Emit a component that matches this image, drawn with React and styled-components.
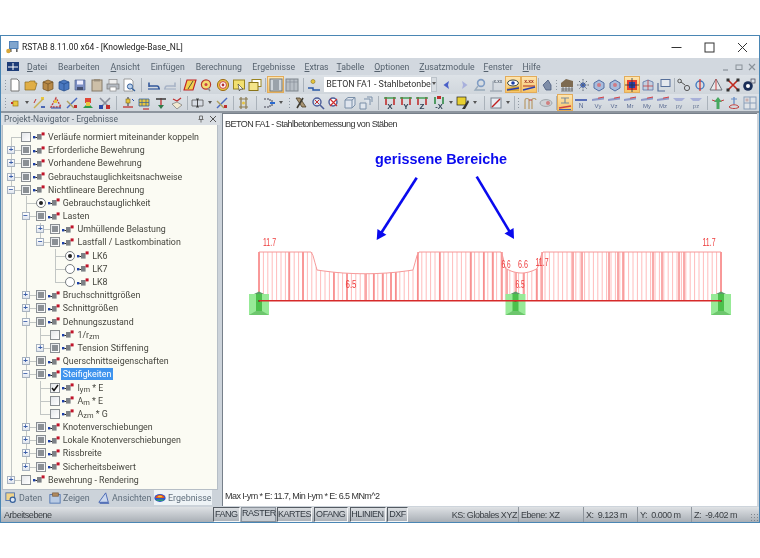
import styled, { createGlobalStyle } from "styled-components";

const Global = createGlobalStyle`
  html, body { margin: 0; padding: 0; background: #fff; }
  body { font-family: Roboto, "Noto Sans", sans-serif; }
`;

const Page = styled.div`
  width: 760px;
  height: 558px;
  padding-top: 35px;
  box-sizing: border-box;
  overflow: hidden;
  filter: blur(0.35px);
`;
const Win = styled.div`
  height: 488px;
  display: flex;
  flex-direction: column;
  border: 1px solid #4a86b4;
  border-bottom-width: 1.5px;
  box-sizing: border-box;
  background: #cdd4db;
`;
const TitleBar = styled.div`
  height: 22px;
  flex: none;
  display: flex;
  align-items: center;
  background: #fff;
  padding-left: 5px;
`;
const TitleText = styled.span`
  margin-left: 3px;
  font-size: 8.5px;
  color: #222;
  flex: 1;
`;
const WinBtn = styled.div`
  width: 33px;
  height: 22px;
  display: flex;
  align-items: center;
  justify-content: center;
`;
const MenuBar = styled.div`
  height: 17px;
  flex: none;
  display: flex;
  align-items: center;
  background: #d2d8df;
  padding-left: 6px;
`;
const MenuItem = styled.span`
  font-size: 8.7px;
  color: #56626e;
  margin-left: ${({ $ml }) => $ml}px;
  u { text-underline-offset: 1px; }
`;
const MdiBtns = styled.div`
  margin-left: auto;
  display: flex;
  gap: 5px;
  padding-right: 3px;
  align-items: center;
`;
const ToolBar = styled.div`
  height: 19px;
  flex: none;
  display: flex;
  align-items: center;
  background: linear-gradient(#dde2e7, #d0d6dc);
  padding-left: 3px;
  box-sizing: border-box;
  ${({ $last }) => $last && "border-bottom: 2px solid #8d959e;"}
`;
const Btn = styled.div`
  width: 16.3px;
  height: 17px;
  flex: none;
  display: flex;
  align-items: center;
  justify-content: center;
  box-sizing: border-box;
  ${({ $on }) => $on && "background: linear-gradient(#fde5b0, #f6c468); border: 1px solid #e3ac5a;"}
`;
const Sep = styled.div`
  width: ${({ $w }) => $w}px;
  height: 14px;
  flex: none;
  position: relative;
  &::after {
    content: "";
    position: absolute;
    left: 50%;
    top: 0;
    bottom: 0;
    width: 1px;
    background: #aab2ba;
  }
`;
const Dots = styled.div`
  width: ${({ $w }) => $w}px;
  height: 12px;
  flex: none;
  background: radial-gradient(circle, #8f98a2 0.7px, transparent 1px) center top / 3px 3px repeat-y;
`;
const Arrow = styled.div`
  width: 8px;
  flex: none;
  display: flex;
  justify-content: center;
  &::after {
    content: "";
    border: 2px solid transparent;
    border-top: 3px solid #555;
    margin-top: 2px;
  }
`;
const Combo = styled.div`
  width: 113px;
  height: 15px;
  flex: none;
  display: flex;
  margin: 0 2px;
  background: #fff;
`;
const ComboText = styled.span`
  flex: 1;
  font-size: 8.9px;
  line-height: 15px;
  color: #333;
  padding-left: 2px;
  white-space: nowrap;
`;
const ComboDrop = styled.div`
  width: 10px;
  background: #d8dde2;
  border: 1px solid #bcc3ca;
  box-sizing: border-box;
  display: flex;
  justify-content: center;
  &::after {
    content: "";
    border: 2.5px solid transparent;
    border-top: 3px solid #555;
    margin-top: 4px;
  }
`;
const Main = styled.div`
  flex: 1;
  min-height: 0;
  display: flex;
  padding-right: 1px;
`;
const Panel = styled.div`
  width: 219px;
  flex: none;
  display: flex;
  flex-direction: column;
  background: #ccd3da;
`;
const PanelHead = styled.div`
  height: 12px;
  flex: none;
  display: flex;
  align-items: center;
  justify-content: space-between;
  padding: 0 3px;
  font-size: 8.5px;
  color: #56626e;
  background: #d9dee3;
`;
const PanelTools = styled.div`
  display: flex;
  gap: 4px;
  align-items: center;
`;
const TreeBox = styled.div`
  flex: 1;
  min-height: 0;
  margin: 0 2px 0 1px;
  padding-top: 5.4px;
  background: #fbfbf3;
  border: 1px solid #b6bec6;
  border-width: 0 1px 1px 1px;
  box-sizing: border-box;
  overflow: hidden;
`;
const Row = styled.div`
  height: 13.2px;
  display: flex;
  align-items: center;
  padding-left: 1px;
`;
const Guide = styled.div`
  width: 14.7px;
  height: 100%;
  flex: none;
  position: relative;
  &::before {
    content: "";
    display: ${({ $t }) => ($t === " " ? "none" : "block")};
    position: absolute;
    left: 7px;
    width: 1px;
    background: #c2c6c4;
    top: ${({ $t }) => ($t === "r" ? "50%" : 0)};
    bottom: ${({ $t }) => ($t === "L" ? "50%" : 0)};
  }
  &::after {
    content: "";
    display: ${({ $t }) => ($t === " " || $t === "|" ? "none" : "block")};
    position: absolute;
    left: 7px;
    width: 10px;
    top: 50%;
    height: 1px;
    background: #c2c6c4;
  }
`;
const Expander = styled.div`
  position: absolute;
  left: 3px;
  top: 2.6px;
  width: 8px;
  height: 8px;
  z-index: 1;
  box-sizing: border-box;
  border: 1px solid #a7b2bf;
  background: linear-gradient(#fff, #dfe5ee);
  display: flex;
  align-items: center;
  justify-content: center;
  font: 700 8px/6px "Liberation Sans", sans-serif;
  color: #3b5ea8;
`;
const Check = styled.div`
  width: 10px;
  height: 10px;
  flex: none;
  margin-left: 2.3px;
  box-sizing: border-box;
  border: 1px solid #8a8f93;
  background: linear-gradient(135deg, #e4e7ea, #fff);
  display: flex;
  align-items: center;
  justify-content: center;
  &::after {
    content: "";
    display: ${({ $v }) => ($v === "mixed" ? "block" : "none")};
    width: 6px;
    height: 6px;
    background: #8b9095;
  }
`;
const Radio = styled.div`
  width: 10px;
  height: 10px;
  flex: none;
  margin-left: 2.3px;
  box-sizing: border-box;
  border: 1px solid #777c80;
  border-radius: 50%;
  background: #fff;
  display: flex;
  align-items: center;
  justify-content: center;
  &::after {
    content: "";
    display: ${({ $on }) => ($on ? "block" : "none")};
    width: 4px;
    height: 4px;
    border-radius: 50%;
    background: #222;
  }
`;
const Label = styled.span`
  margin-left: 1.6px;
  padding: 0 1.5px;
  font-size: 8.85px;
  line-height: 12px;
  white-space: nowrap;
  color: ${({ $sel }) => ($sel ? "#fff" : "#46463f")};
  background: ${({ $sel }) => ($sel ? "#3f94ee" : "transparent")};
  sub { font-size: 7.5px; line-height: 0; vertical-align: -1px; }
`;
const Tabs = styled.div`
  height: 15px;
  flex: none;
  display: flex;
  align-items: center;
  margin-bottom: 2px;
  padding-left: 4px;
`;
const Tab = styled.div`
  width: ${({ $w }) => $w}px;
  height: 15px;
  flex: none;
  display: flex;
  align-items: center;
  gap: 2px;
  font-size: 8.9px;
  color: #5f6e7c;
  box-sizing: border-box;
  ${({ $on }) => $on && "background: #eef3f6;"}
`;
const View = styled.div`
  flex: 1;
  min-width: 0;
  margin: 0 1px 1px 2px;
  display: flex;
  flex-direction: column;
  background: #fff;
  border-left: 1px solid #77808a;
  border-top: 1px solid #77808a;
`;
const Caption = styled.div`
  height: 20px;
  flex: none;
  display: flex;
  align-items: center;
  padding-left: 2px;
  font-family: "Liberation Sans", Arial, sans-serif;
  font-size: 9px;
  letter-spacing: -0.55px;
  color: #333;
  white-space: nowrap;
`;
const Canvas = styled.svg`
  flex: 1;
  min-height: 0;
  width: 100%;
  display: block;
`;
const Status = styled.div`
  height: 15px;
  flex: none;
  display: flex;
  align-items: stretch;
  background: linear-gradient(#dfe2e5, #a9afb6);
  font-family: "Liberation Sans", Arial, sans-serif;
  font-size: 9px;
  letter-spacing: -0.45px;
  color: #3a3f44;
  position: relative;
`;
const StatusName = styled.div`
  width: 212px;
  flex: none;
  box-sizing: border-box;
  padding-left: 3px;
  line-height: 16px;
`;
const Toggle = styled.div`
  width: ${({ $w }) => $w}px;
  flex: none;
  margin-right: 1.5px;
  box-sizing: border-box;
  border: 1px solid #f4f5f6;
  border-left-color: #555b62;
  border-top-color: #555b62;
  text-align: center;
  line-height: 13px;
  color: #333a42;
  ${({ $on }) => $on && "border-color: #8b929a; background: #c6cbd1; line-height: 11px;"}
`;
const Field = styled.div`
  width: ${({ $w }) => $w}px;
  flex: none;
  box-sizing: border-box;
  padding-left: 2px;
  line-height: 16px;
  white-space: pre;
  text-align: ${({ $right }) => ($right ? "right" : "left")};
  ${({ $right }) => $right && "padding-right: 1px;"}
  border-right: 1px solid #8f959c;
  ${({ $last }) => $last && "border-right: 0;"}
`;
const Grip = styled.div`
  position: absolute;
  right: 1px;
  bottom: 1px;
  width: 8px;
  height: 8px;
  background: radial-gradient(circle, #7e858c 0.7px, transparent 1px) 0 0 / 3px 3px;
`;

const Node = () => (
  <svg width="12" height="9" viewBox="0 0 12 9" style={{ marginLeft: 2, flex: "none" }}>
    <rect x="0" y="4" width="2.4" height="2.4" fill="#1c3fa8" />
    <rect x="2.4" y="5" width="2" height="1" fill="#222" />
    <rect x="4" y="2" width="4.6" height="5.6" fill="#7d8186" />
    <rect x="8.6" y="0.4" width="3" height="3" fill="#c0142a" />
  </svg>
);

const S = ({ children }) => (
  <svg width="14" height="14" viewBox="0 0 14 14">{children}</svg>
);
const f = { fontFamily: "Liberation Sans", fontWeight: 700 };
const lf = { fontFamily: "Liberation Sans" };

const barIcon = (l) => (
  <S>
    <path d="M1 3L13 1V3.4L1 5Z" fill="#8f9ac8" />
    <path d="M7 2.2L13 1" stroke="#d44" strokeWidth="1" />
    <text x="7" y="12" fontSize="6" textAnchor="middle" fill="#5b6b92" style={lf}>{l}</text>
  </S>
);
const axisIcon = (l, c) => (
  <S>
    <path d="M3 1V9M11 1V9" stroke={c} strokeWidth="1.6" />
    <path d="M1 2H13" stroke="#3a9a4a" strokeWidth="1.4" />
    <text x="7" y="13" fontSize="8" textAnchor="middle" fill="#345" style={f}>{l}</text>
  </S>
);

const icons = {
  page: <S><path d="M3 1H9L11 3V13H3Z" fill="#fff" stroke="#777" /></S>,
  folder: <S><path d="M1 4H5L6 3H11V5H13L11 12H1Z" fill="#e0ae45" stroke="#8a6a20" strokeWidth=".7" /></S>,
  boxO: <S><path d="M2 4L7 2L12 4V11L7 13L2 11Z" fill="#b88a48" stroke="#6d4e22" strokeWidth=".7" /><path d="M2 4L7 6L12 4M7 6V13" stroke="#6d4e22" fill="none" strokeWidth=".7" /></S>,
  boxB: <S><path d="M2 4L7 2L12 4V11L7 13L2 11Z" fill="#4a78c0" stroke="#234a88" strokeWidth=".7" /><path d="M2 4L7 6L12 4M7 6V13" stroke="#234a88" fill="none" strokeWidth=".7" /></S>,
  save: <S><path d="M2 2H12V12H2Z" fill="#7d8fc4" stroke="#55648f" strokeWidth=".7" /><rect x="4" y="2.5" width="6" height="4" fill="#eef" /><rect x="4" y="9" width="6" height="3" fill="#444f70" /></S>,
  clip: <S><rect x="2" y="2" width="10" height="11" fill="#cdbfa8" stroke="#857a68" /><rect x="4" y="1" width="6" height="2.4" fill="#9a8e7c" /></S>,
  print: <S><rect x="3" y="1.5" width="8" height="5" fill="#eee" stroke="#888" strokeWidth=".7" /><rect x="1" y="6" width="12" height="5" fill="#b4bac2" stroke="#777" strokeWidth=".7" /><rect x="4" y="9" width="6" height="4" fill="#fff" stroke="#888" strokeWidth=".7" /></S>,
  prev: <S><path d="M2 1H9L11 3V13H2Z" fill="#fff" stroke="#888" strokeWidth=".8" /><circle cx="8" cy="8.5" r="2.6" fill="#bcd3ee" stroke="#345f9a" /><path d="M10 10.5L13 13" stroke="#345f9a" strokeWidth="1.4" /></S>,
  undo: <S><path d="M2 9V4.5M2 8H10C11 8 12 9 12 11" stroke="#33589a" strokeWidth="1.6" fill="none" /><path d="M1 11H13" stroke="#33589a" strokeWidth="1.2" /></S>,
  redo: <S><path d="M12 9V4.5M12 8H4C3 8 2 9 2 11" stroke="#a8b4c6" strokeWidth="1.6" fill="none" /><path d="M1 11H13" stroke="#a8b4c6" strokeWidth="1.2" /></S>,
  para: <S><path d="M4 2H13L10 12H1Z" fill="#f0d050" stroke="#c02020" strokeWidth="1.1" /><path d="M5 11L10 3" stroke="#333" strokeWidth=".8" /></S>,
  bulb: <S><circle cx="7" cy="6.5" r="4.6" fill="#f4dc70" stroke="#b83a2c" strokeWidth="1.2" /><circle cx="7" cy="6.5" r="1.5" fill="#c44" /><path d="M9 10L11 13" stroke="#888" strokeWidth="1.4" /></S>,
  target: <S><circle cx="7" cy="7" r="5.6" fill="#e8c040" stroke="#a0701a" /><circle cx="7" cy="7" r="3.4" fill="#fff" stroke="#c44" /><circle cx="7" cy="7" r="1.4" fill="#b03030" /></S>,
  note: <S><rect x="1.5" y="2" width="11" height="9" fill="#f2e070" stroke="#9a8420" /><path d="M6 6L11 11L8.4 11L7.4 13Z" fill="#fff" stroke="#333" strokeWidth=".6" /></S>,
  win2: <S><rect x="4" y="1.5" width="9" height="7" fill="#fff" stroke="#9a8420" /><rect x="1" y="4.5" width="9" height="8" fill="#f4e48a" stroke="#8a7418" /></S>,
  panelA: <S><rect x="1" y="1" width="12" height="12" fill="#cfd5db" stroke="#6f767d" /><rect x="4" y="2" width="6" height="10" fill="#9aa2aa" /></S>,
  panelB: <S><rect x="1" y="1" width="12" height="12" fill="#b8bfc6" stroke="#7f868d" /><path d="M1 4H13M5 1V13M9 1V13" stroke="#858d95" strokeWidth=".7" /></S>,
  star: <S><circle cx="6" cy="3.5" r="2" fill="#e6c63c" stroke="#8a701a" strokeWidth=".6" /><path d="M1 10H6V12H13" stroke="#2a5aa8" strokeWidth="1.5" fill="none" /></S>,
  left: <S><path d="M9 3L3.5 7L9 11L8 7Z" fill="#4a60c8" /></S>,
  right: <S><path d="M5 3L10.5 7L5 11L6 7Z" fill="#a8b0dc" /></S>,
  pin: <S><circle cx="8" cy="5" r="3.4" fill="none" stroke="#7f9cc4" strokeWidth="1.6" /><path d="M5 8L2 12H12" stroke="#9ab" strokeWidth="1.3" fill="none" /></S>,
  axis: <S><path d="M4 13V3M1 13H13" stroke="#a4adb8" strokeWidth="1.3" /><text x="9" y="5" fontSize="4.5" textAnchor="middle" fill="#66707c" style={f}>x.xx</text></S>,
  eye: <S><path d="M1 10L13 8V13H1Z" fill="#d8a838" /><ellipse cx="7" cy="5" rx="5.4" ry="3" fill="#fff" stroke="#344" /><circle cx="7" cy="5" r="1.8" fill="#1c3fa8" /><path d="M1 12L13 10" stroke="#2a3fb0" strokeWidth="1.3" /></S>,
  xxx: <S><text x="7" y="5" fontSize="5" textAnchor="middle" fill="#a03020" style={f}>x.xx</text><path d="M1 8H13" stroke="#b03020" /><path d="M1 12L13 9" stroke="#2a3fb0" strokeWidth="1.5" /></S>,
  hand: <S><path d="M8 2L3 7L6 12H11V7Z" fill="#7e8da8" stroke="#4a5a7c" strokeWidth=".8" /></S>,
  mesh: <S><path d="M1 5L6 1L13 3V9H1Z" fill="#7d6a50" /><path d="M1 11H13M1 13H13M3 9V13M6 9V13M9 9V13M12 9V13" stroke="#555" strokeWidth=".7" /></S>,
  sun: <S><circle cx="7" cy="7" r="2.6" fill="#4a70c8" /><path d="M7 1V13M1 7H13M3 3L11 11M11 3L3 11" stroke="#55606e" strokeWidth=".9" strokeDasharray="1.6 1" /></S>,
  cube: <S><path d="M2 5L7 2L12 5V10L7 13L2 10Z" fill="#a8bcdc" stroke="#5470a4" /><circle cx="7" cy="7" r="2" fill="#e06060" opacity=".7" /></S>,
  zoom: <S><rect x="2" y="2" width="10" height="10" fill="#e84030" /><rect x="4" y="4" width="6" height="6" fill="#2a40a8" /><path d="M7 0V14M0 7H14" stroke="#234" strokeWidth=".8" /></S>,
  frame: <S><path d="M2 12V4L7 2L12 4V12Z" fill="#c4cfe0" stroke="#5a74a4" strokeWidth=".8" /><path d="M2 8H12M7 2V12" stroke="#c04040" strokeWidth=".8" /></S>,
  scroll: <S><rect x="4" y="1.5" width="9" height="7" fill="#e4e8ee" stroke="#566f9a" /><path d="M1 5V13H8" stroke="#566f9a" strokeWidth="1.2" fill="none" /></S>,
  hook: <S><circle cx="2.6" cy="3" r="1.8" fill="none" stroke="#555" /><path d="M4 4L8 7" stroke="#555" /><circle cx="10" cy="10" r="2.6" fill="none" stroke="#555" /></S>,
  phi: <S><circle cx="7" cy="7" r="4" fill="none" stroke="#3f78c0" strokeWidth="1.3" /><path d="M7 1V13" stroke="#d03a3a" strokeWidth="1.3" /></S>,
  tri: <S><path d="M7 1L13 12H1Z" fill="#e8eaec" stroke="#6b7178" /><path d="M7 1V12" stroke="#c44" /></S>,
  cross: <S><path d="M2 2L12 12M12 2L2 12" stroke="#c02a1e" strokeWidth="1.6" /><rect x="0.5" y="0.5" width="3" height="3" fill="#333" /><rect x="10.5" y="0.5" width="3" height="3" fill="#333" /><rect x="0.5" y="10.5" width="3" height="3" fill="#333" /><rect x="10.5" y="10.5" width="3" height="3" fill="#333" /></S>,
  info: <S><circle cx="6" cy="8" r="4.8" fill="#1a2e58" /><circle cx="6" cy="8" r="2" fill="#fff" /><rect x="9" y="1" width="4" height="4" fill="#d8dee6" stroke="#445" strokeWidth=".7" /></S>,
  node: <S><rect x="5" y="5" width="5" height="5" fill="#e8c640" stroke="#9a7a18" strokeWidth=".7" /><rect x="3" y="6" width="2" height="2" fill="#c03030" /></S>,
  line1: <S><rect x="9" y="1" width="3" height="3" fill="#e8c640" /><path d="M2 12L11 3" stroke="#c8b050" strokeWidth="1.4" /><path d="M4 3L2 7" stroke="#c03030" /><path d="M9 11H13" stroke="#2a4aa8" strokeWidth="1.6" /></S>,
  tri2: <S><path d="M7 2L2 11H12Z" fill="none" stroke="#c04040" strokeDasharray="2 1" strokeWidth="1.4" /><rect x="5" y="4" width="3" height="3" fill="#e8c640" /><path d="M2 12H12" stroke="#2a4aa8" /></S>,
  line2: <S><path d="M2 12L12 2" stroke="#4a6ac0" strokeWidth="1.4" /><path d="M2 5L9 12" stroke="#b0a060" strokeWidth="1.4" /><rect x="9" y="9" width="3" height="3" fill="#c03030" /></S>,
  green: <S><rect x="4" y="2" width="6" height="5" fill="#e04838" /><path d="M2 12L7 7L12 12Z" fill="#2f9a4a" /><rect x="5" y="6" width="4" height="4" fill="#e8c640" /></S>,
  xmark: <S><path d="M2 2L12 12M12 2L2 12" stroke="#8a8f9c" strokeWidth="1.6" /><rect x="8" y="9" width="4" height="4" fill="#c03030" /><rect x="1" y="9" width="4" height="4" fill="#2a4aa8" /></S>,
  nodeD: <S><path d="M7 1V10" stroke="#333" /><rect x="5" y="3" width="4" height="4" fill="#e8c640" stroke="#7a6418" strokeWidth=".6" /><path d="M2 11H12" stroke="#c03030" strokeWidth="1.3" /><path d="M11 3L13 5" stroke="#2a4aa8" /></S>,
  gridA: <S><path d="M2 3H12V10H2Z" fill="#e8c640" stroke="#345f9a" strokeWidth=".8" /><path d="M5 3V10M9 3V10M2 6.5H12" stroke="#345f9a" strokeWidth=".7" /><path d="M6 13H12" stroke="#c03030" strokeWidth="1.2" /></S>,
  arrowR: <S><path d="M7 2V9" stroke="#c03030" strokeWidth="1.3" /><path d="M2 3H12" stroke="#444" strokeWidth="1.6" /><path d="M4 9L7 13L10 9Z" fill="#2f7a4a" /></S>,
  bolt: <S><path d="M3 3L7 5L11 2" stroke="#c03030" strokeWidth="1.3" fill="none" /><path d="M2 8L7 6L12 9L7 13Z" fill="#f0e8d0" stroke="#777" strokeWidth=".7" /></S>,
  cursor: <S><path d="M1 4H12V10H1Z" fill="#d8dde4" stroke="#555" strokeWidth=".8" /><path d="M5 3H8M6.5 3V11M5 11H8" stroke="#222" strokeWidth=".8" /></S>,
  flag: <S><path d="M2 3H11M2 11H11M4 1V13M9 1V13" stroke="#8a7a50" strokeWidth="1.2" /><circle cx="6.5" cy="7" r="1.5" fill="#e8c640" /></S>,
  rect: <S><path d="M2 3H8V5H11V9H8V11H2" fill="none" stroke="#445" strokeDasharray="2 1" /><path d="M8 7L13 7" stroke="#2a6ad0" strokeWidth="2" /></S>,
  fork: <S><path d="M2 2L8 11H12L6 2Z" fill="#a89472" stroke="#4d4028" strokeWidth=".8" /><path d="M9 2L3 12" stroke="#3d3a30" strokeWidth="1.6" /></S>,
  lensR: <S><circle cx="6" cy="6" r="4" fill="#dbe4f0" stroke="#4c5d98" strokeWidth="1.4" /><path d="M4 4L8 8M8 4L4 8" stroke="#c03030" /><path d="M9 9L13 13" stroke="#4c5d98" strokeWidth="1.6" /></S>,
  lensX: <S><circle cx="6" cy="6" r="4" fill="#fff" stroke="#4c5d98" strokeWidth="1.4" /><path d="M3 3L10 10M10 3L3 10" stroke="#d03030" strokeWidth="1.2" /></S>,
  iso: <S><path d="M2 4L5 1.5H12V9L9 12H2Z M2 4H9V12 M9 4L12 1.5" fill="#dfe5ee" stroke="#7a8fa8" /></S>,
  iso2: <S><path d="M1 7H7V13H1Z M5 3H11V9" fill="#e0e6ee" stroke="#7a8fa8" /><path d="M8 1H13V6" fill="none" stroke="#7a8fa8" /></S>,
  X: axisIcon("X", "#c03030"),
  Y: axisIcon("Y", "#c03030"),
  Z: axisIcon("Z", "#c03030"),
  mX: <S><path d="M3 1V8M11 1V8" stroke="#2f8a44" strokeWidth="1.6" /><rect x="5" y="0" width="4" height="3" fill="#c03030" /><text x="7" y="13" fontSize="7.5" textAnchor="middle" fill="#345" style={f}>-X</text></S>,
  paint: <S><rect x="1" y="1" width="9" height="8" fill="#e8d030" stroke="#222" strokeWidth=".7" /><path d="M6 13L12 4L13 6L9 13Z" fill="#333" /></S>,
  ruler: <S><rect x="2" y="2" width="10" height="10" fill="#e8edf3" stroke="#7a8490" /><path d="M3 11L11 3" stroke="#c02020" strokeWidth="1.5" /></S>,
  hooks: <S><path d="M2 13V4C2 2 6 2 6 4V13M9 13V4C9 2 13 2 13 4" fill="none" stroke="#b89a68" strokeWidth="1.2" /><path d="M6 4L9 4" stroke="#c04040" /></S>,
  pill: <S><ellipse cx="7" cy="7" rx="6" ry="3.4" fill="#cfd2d6" stroke="#a0a6ac" /><circle cx="9" cy="7" r="2" fill="#d08080" /></S>,
  beam: <S><path d="M3 2H11M7 2V7M3 7H11" stroke="#7a8a9a" strokeWidth="1.2" /><path d="M1 12L13 10" stroke="#d04040" strokeWidth="1.4" /><path d="M1 13.5H13" stroke="#4060b0" strokeWidth="1" /></S>,
  Bar: <S><path d="M1 3H13V5H1Z" fill="#5a70b8" /><text x="7" y="12" fontSize="6.5" textAnchor="middle" fill="#5b6b92" style={lf}>N</text></S>,
  Vy: barIcon("Vy"), Vz: barIcon("Vz"), Mt: barIcon("Mr"), My: barIcon("My"), Mz: barIcon("Mz"),
  py: <S><path d="M1 2H13L10 5H4Z" fill="#a8b0d8" /><text x="7" y="12" fontSize="6" textAnchor="middle" fill="#6b7a96" style={lf}>py</text></S>,
  pz: <S><path d="M1 2H13L10 5H4Z" fill="#a8b0d8" /><text x="7" y="12" fontSize="6" textAnchor="middle" fill="#6b7a96" style={lf}>pz</text></S>,
  up: <S><path d="M7 1L11 6H8.5V13H5.5V6H3Z" fill="#48a860" /><path d="M1 4L4 5M13 4L10 5" stroke="#c04040" /></S>,
  support: <S><path d="M7 1V8" stroke="#6a90c8" strokeWidth="1.4" /><path d="M4 3H10" stroke="#6a90c8" /><path d="M2 11C4 8 10 8 12 11C10 13 4 13 2 11Z" fill="none" stroke="#c04040" /></S>,
  tile: <S><rect x="1" y="1" width="12" height="12" fill="#e0e4e8" stroke="#8a9eb8" /><path d="M7 1V13M1 7H13" stroke="#8a9eb8" /><rect x="2.5" y="2.5" width="3" height="3" fill="#c8b0b0" /></S>,
};
icons.rect2 = icons.cursor;

const row1 = [":3", "page", "folder", "boxO", "boxB", "save", "clip", "print", "prev", "|8", "undo", "redo", "|4",
  "para", "bulb", "target", "note", "win2", "|4", "*panelA", "panelB", "|6", "star", "COMBO", "left", "right", "pin", "axis", "*eye", "*xxx", "|2",
  "hand", ":3", "mesh", "sun", "cube", "cube", "*zoom", "frame", "scroll", "|3", "hook", "phi", "tri", "cross", "info"];
const row2 = [":3", "node", "v", "line1", "tri2", "line2", "green", "xmark", "|7", "nodeD", "gridA", "arrowR", "bolt", "|5",
  "rect2", "v", "line2", "|5", "flag", "|9", "rect", "v", ":8", "fork", "lensR", "lensX", "iso", "iso2", "|7", "X", "Y", "Z", "mX", "v", "paint", "v", "|9",
  "ruler", "v", "|3", ":6", "hooks", "pill", "|3", "*beam", "Bar", "Vy", "Vz", "Mt", "My", "Mz", "py", "pz", "|6", "up", "support", "tile"];

const ToolRow = ({ items, last }) => (
  <ToolBar $last={last}>
    {items.map((t, i) => {
      if (t === "COMBO") return <Combo key={i}><ComboText>BETON FA1 - Stahlbetonbe</ComboText><ComboDrop /></Combo>;
      if (t[0] === "|") return <Sep key={i} $w={+t.slice(1)} />;
      if (t[0] === ":") return <Dots key={i} $w={+t.slice(1)} />;
      if (t === "v") return <Arrow key={i} />;
      const on = t[0] === "*";
      return <Btn key={i} $on={on}>{icons[on ? t.slice(1) : t]}</Btn>;
    })}
  </ToolBar>
);

const menu = [
  ["D", "atei", 8], ["", "Bearbeiten", 11], ["A", "nsicht", 11], ["", "Einfügen", 11], ["", "Berechnung", 11], ["", "Ergebnisse", 10.5],
  ["E", "xtras", 9.5], ["T", "abelle", 8], ["O", "ptionen", 10], ["Z", "usatzmodule", 10], ["F", "enster", 9], ["H", "ilfe", 10],
];

// guides, toggle, expander, text
const tree = [
  ["r", "off", "", "Verläufe normiert miteinander koppeln"],
  ["T", "mixed", "+", "Erforderliche Bewehrung"],
  ["T", "mixed", "+", "Vorhandene Bewehrung"],
  ["T", "mixed", "+", "Gebrauchstauglichkeitsnachweise"],
  ["T", "mixed", "-", "Nichtlineare Berechnung"],
  ["|T", "radioOn", "", "Gebrauchstauglichkeit"],
  ["|T", "mixed", "-", "Lasten"],
  ["||T", "mixed", "+", "Umhüllende Belastung"],
  ["||L", "mixed", "-", "Lastfall / Lastkombination"],
  ["|| T", "radioOn", "", "LK6"],
  ["|| T", "radio", "", "LK7"],
  ["|| L", "radio", "", "LK8"],
  ["|T", "mixed", "+", "Bruchschnittgrößen"],
  ["|T", "mixed", "+", "Schnittgrößen"],
  ["|T", "mixed", "-", "Dehnungszustand"],
  ["||T", "off", "", <>1/r<sub>zm</sub></>],
  ["||L", "mixed", "+", "Tension Stiffening"],
  ["|T", "mixed", "+", "Querschnittseigenschaften"],
  ["|T", "mixed", "-", "Steifigkeiten", true],
  ["||T", "on", "", <>I<sub>ym</sub> * E</>],
  ["||T", "off", "", <>A<sub>m</sub> * E</>],
  ["||L", "off", "", <>A<sub>zm</sub> * G</>],
  ["|T", "mixed", "+", "Knotenverschiebungen"],
  ["|T", "mixed", "+", "Lokale Knotenverschiebungen"],
  ["|T", "mixed", "+", "Rissbreite"],
  ["|L", "mixed", "+", "Sicherheitsbeiwert"],
  ["L", "off", "+", "Bewehrung - Rendering"],
];

const TreeRow = ({ guides, toggle, exp, text, sel }) => (
  <Row>
    {guides.split("").map((g, i) => (
      <Guide key={i} $t={g}>
        {exp && i === guides.length - 1 && <Expander>{exp === "+" ? "+" : "−"}</Expander>}
      </Guide>
    ))}
    {toggle === "radio" || toggle === "radioOn" ? (
      <Radio $on={toggle === "radioOn"} />
    ) : (
      <Check $v={toggle}>
        {toggle === "on" && (
          <svg width="8" height="8" viewBox="0 0 8 8">
            <path d="M1 4L3 6.5L7 1" fill="none" stroke="#111" strokeWidth="1.5" />
          </svg>
        )}
      </Check>
    )}
    <Node />
    <Label $sel={sel}>{text}</Label>
  </Row>
);

// dunkle Stäbe im Diagramm
const dark = [259, 289, 303, 334, 347, 366, 374, 383, 391, 396, 418, 440, 471, 484, 493, 502, 507, 516, 524, 537, 542, 573, 582, 609, 618, 623, 653, 662, 679, 684, 721];
const topAt = (x) => {
  if (x > 312 && x < 418) {
    if (x < 317) return 252 + (x - 312) * 3.6;
    if (x > 413) return 270 - (x - 413) * 3.6;
    const t = (x - 317) / 96;
    return 270 + 15 * t * (1 - t);
  }
  if (x > 502 && x < 542) {
    if (x < 505) return 252 + (x - 502) * 5.3;
    if (x > 538) return 268 - (x - 538) * 4;
    const t = (x - 505) / 33;
    return 268 + 20 * t * (1 - t);
  }
  return 252;
};
const light = Array.from({ length: 106 }, (_, i) => 259 + i * 4.4);
const outline = Array.from({ length: 232 }, (_, i) => {
  const x = 259 + i * 2;
  return `${x},${topAt(x).toFixed(1)}`;
}).join(" ");

const Val = ({ x, y, w = 13, children }) => (
  <text x={x} y={y} fontSize="10" fill="#ee3a3a" textAnchor="middle" textLength={w} lengthAdjust="spacingAndGlyphs" style={lf}>{children}</text>
);

const Support = ({ x }) => (
  <g>
    <path d={`M${x - 5} 294L${x} 291.5L${x + 5} 294Z`} fill="#5c9a68" />
    <rect x={x - 10} y="294" width="20" height="21" fill="#97ea97" />
    <rect x={x - 3} y="294" width="6" height="18" fill="#4cc04c" />
    <path d={`M${x - 10} 315L${x - 3} 311H${x + 3}L${x + 10} 315Z`} fill="#6cc66c" />
    <path d={`M${x - 1} 301H${x + 1}`} stroke="#556b2f" strokeWidth="2" />
  </g>
);

const Arrowed = ({ x1, y1, x2, y2 }) => {
  const a = Math.atan2(y2 - y1, x2 - x1);
  const l = 11;
  const p = (d) => `${x2 - l * Math.cos(a + d)},${y2 - l * Math.sin(a + d)}`;
  const nx = x2 - 8 * Math.cos(a);
  const ny = y2 - 8 * Math.sin(a);
  return (
    <g>
      <line x1={x1} y1={y1} x2={nx} y2={ny} stroke="#0a0aee" strokeWidth="2.6" />
      <polygon points={`${x2},${y2} ${p(0.5)} ${p(-0.5)}`} fill="#0a0aee" />
    </g>
  );
};

const Diagram = () => (
  <Canvas viewBox="223 134 534 352" preserveAspectRatio="xMinYMin meet">
    <text x="441" y="164" textAnchor="middle" fontSize="14.4" fill="#0a0aee" style={f}>gerissene Bereiche</text>
    <Arrowed x1={416.7} y1={177.7} x2={376.7} y2={240} />
    <Arrowed x1={476.7} y1={176.7} x2={514} y2={239} />
    {light.map((x) => <line key={x} x1={x} x2={x} y1={topAt(x)} y2="300" stroke="#ffbcbc" strokeWidth="1" />)}
    {dark.map((x, i) => <line key={i} x1={x} x2={x} y1={topAt(x)} y2="300" stroke="#f25555" strokeWidth="1" />)}
    <polyline points={outline} fill="none" stroke="#f69a9a" strokeWidth="1" />
    <Support x={259} />
    <Support x={515.5} />
    <Support x={721} />
    <line x1="259" x2="721" y1="300.7" y2="300.7" stroke="#d62a2a" strokeWidth="1.6" />
    <Val x={269.5} y={245.5}>11.7</Val>
    <Val x={351} y={287.5} w={11}>6.5</Val>
    <Val x={506} y={268} w={9}>6.6</Val>
    <Val x={523} y={268} w={10}>6.6</Val>
    <Val x={542} y={265.5} w={13}>11.7</Val>
    <Val x={520} y={287.5} w={9}>6.5</Val>
    <Val x={709} y={245.5}>11.7</Val>
  </Canvas>
);

const TabIcon = ({ k }) => (
  <svg width="12" height="12" viewBox="0 0 14 14" style={{ flex: "none" }}>
    {k === "daten" && <><rect x="1" y="1" width="10" height="9" fill="#f0d48a" stroke="#4a70b0" /><circle cx="9" cy="9" r="3" fill="#dfe8f4" stroke="#345f9a" strokeWidth="1.4" /></>}
    {k === "zeigen" && <><rect x="1" y="3" width="12" height="10" fill="#b9cbe4" stroke="#4a70b0" /><path d="M4 1H11V5H4Z" fill="#b08a60" stroke="#6d5030" strokeWidth=".7" /></>}
    {k === "ans" && <><path d="M1 12L9 1L12 12Z" fill="#cbd8ee" stroke="#3c5cb0" /><path d="M2 13H13" stroke="#3c5cb0" strokeWidth="1.4" /></>}
    {k === "erg" && <><ellipse cx="7" cy="7" rx="6.6" ry="4.6" fill="#2f55c8" /><path d="M1.5 7C3 2 11 2 12.5 7Z" fill="#e85020" /><path d="M4 6C5 4 9 4 10 6Z" fill="#f0d030" /><path d="M3 9.5H11" stroke="#30b060" strokeWidth="1.4" /></>}
  </svg>
);

export default function App() {
  return (
    <Page>
      <Global />
      <Win>
        <TitleBar>
          <svg width="13" height="14" viewBox="0 0 13 14">
            <rect x="3" y="1" width="9.5" height="8" fill="#4f80b8" />
            <path d="M4 3H11.5M4 5H11.5M4 7H11.5" stroke="#cfe0f0" strokeWidth=".8" />
            <rect x="4" y="9" width="1.6" height="3" fill="#666" /><rect x="10" y="9" width="1.6" height="3" fill="#666" />
            <circle cx="2.4" cy="11" r="2.2" fill="#d8a83a" />
          </svg>
          <TitleText>RSTAB 8.11.00 x64 - [Knowledge-Base_NL]</TitleText>
          <WinBtn>
            <svg width="11" height="11" viewBox="0 0 11 11"><path d="M0.5 5.5H10.5" stroke="#333" /></svg>
          </WinBtn>
          <WinBtn>
            <svg width="11" height="11" viewBox="0 0 11 11"><rect x="1" y="1" width="9" height="9" fill="none" stroke="#333" /></svg>
          </WinBtn>
          <WinBtn>
            <svg width="11" height="11" viewBox="0 0 11 11"><path d="M1 1L10 10M10 1L1 10" stroke="#333" /></svg>
          </WinBtn>
        </TitleBar>
        <MenuBar>
          <svg width="12" height="9" viewBox="0 0 12 9">
            <rect width="12" height="9" fill="#1d3c78" />
            <path d="M1 5H11M6 1V8" stroke="#fff" strokeWidth="1" />
          </svg>
          {menu.map(([u, rest, ml]) => (
            <MenuItem key={rest} $ml={ml}>
              {u && <u>{u}</u>}{rest}
            </MenuItem>
          ))}
          <MdiBtns>
            <svg width="8" height="8" viewBox="0 0 8 8"><path d="M1 7H6" stroke="#8a929a" strokeWidth="1.2" /></svg>
            <svg width="8" height="8" viewBox="0 0 8 8"><rect x="1" y="2" width="6" height="4.5" fill="none" stroke="#8a929a" /></svg>
            <svg width="8" height="8" viewBox="0 0 8 8"><path d="M1 1L7 7M7 1L1 7" stroke="#8a929a" strokeWidth="1.2" /></svg>
          </MdiBtns>
        </MenuBar>
        <ToolRow items={row1} />
        <ToolRow items={row2} last />
        <Main>
          <Panel>
            <PanelHead>
              Projekt-Navigator - Ergebnisse
              <PanelTools>
                <svg width="8" height="8" viewBox="0 0 8 8"><path d="M2.5 1H5.5V4.5H2.5ZM1.5 4.5H6.5M4 4.5V7.5" fill="none" stroke="#666" strokeWidth=".9" /></svg>
                <svg width="8" height="8" viewBox="0 0 8 8"><path d="M1 1L7 7M7 1L1 7" stroke="#555" strokeWidth="1" /></svg>
              </PanelTools>
            </PanelHead>
            <TreeBox>
              {tree.map(([g, t, e, text, sel], i) => (
                <TreeRow key={i} guides={g} toggle={t} exp={e} text={text} sel={sel} />
              ))}
            </TreeBox>
            <Tabs>
              <Tab $w={44}><TabIcon k="daten" />Daten</Tab>
              <Tab $w={49}><TabIcon k="zeigen" />Zeigen</Tab>
              <Tab $w={56}><TabIcon k="ans" />Ansichten</Tab>
              <Tab $w={58} $on><TabIcon k="erg" />Ergebnisse</Tab>
            </Tabs>
          </Panel>
          <View>
            <Caption>BETON FA1 - Stahlbetonbemessung von Stäben</Caption>
            <Diagram />
            <Caption>Max I-ym * E: 11.7, Min I-ym * E: 6.5 MNm^2</Caption>
          </View>
        </Main>
        <Status>
          <StatusName>Arbeitsebene</StatusName>
          <Toggle $w={26.5}>FANG</Toggle>
          <Toggle $w={34.5} $on>RASTER</Toggle>
          <Toggle $w={35}>KARTES</Toggle>
          <Toggle $w={34.5}>OFANG</Toggle>
          <Toggle $w={36}>HLINIEN</Toggle>
          <Toggle $w={21}>DXF</Toggle>
          <Field $w={109.5} $right>KS: Globales XYZ</Field>
          <Field $w={65}>Ebene: XZ</Field>
          <Field $w={54}>{"X:  9.123 m"}</Field>
          <Field $w={54}>{"Y:  0.000 m"}</Field>
          <Field $w={60} $last>{"Z:  -9.402 m"}</Field>
          <Grip />
        </Status>
      </Win>
    </Page>
  );
}
